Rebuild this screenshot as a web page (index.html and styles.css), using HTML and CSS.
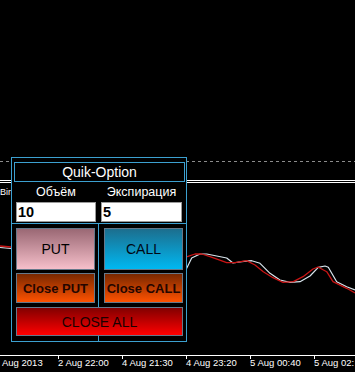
FILE: index.html
```html
<!DOCTYPE html>
<html>
<head>
<meta charset="utf-8">
<link rel="stylesheet" href="styles.css">
</head>
<body>
<div class="screen">
  <div class="chart">
    <svg class="plot" width="355" height="355" viewBox="0 0 355 355">
      <line x1="0" y1="161.5" x2="355" y2="161.5" stroke="#8c8c8c" stroke-dasharray="3 3"/>
      <line x1="0" y1="180.5" x2="355" y2="180.5" stroke="#ffffff"/>
      <line x1="0" y1="182.5" x2="355" y2="182.5" stroke="#ffffff"/>
      <text x="0" y="195" class="chart-label">Bin</text>
      <polyline fill="none" stroke="#d8e4ec" stroke-width="1.2" stroke-linejoin="round"
        points="0,247.5 11,248.5 120,262 186.7,268.3 191.7,258 200,254 206.7,254 216.7,256 226.7,258 233,263 241.7,261.7 251.7,260.7 260,263.3 270,273.3 280,280 290,282.3 300,281.7 310,276 318.3,267.3 325,266 328.3,267.3 336.7,281.7 346.7,286.7 355,290"/>
      <polyline fill="none" stroke="#c81414" stroke-width="1.3" stroke-linejoin="round"
        points="0,246 11,247 120,252 187.3,256.7 195,254 201.7,254 210,256.7 226.7,262.7 235,262.7 246.7,260.7 255,265 263.3,271.7 273,277.7 283,282.3 293.3,281.7 303,276.7 313,269 318,267 326.7,271.7 333,281.7 346.7,288.3 355,293"/>
    </svg>
    <div class="panel">
      <div class="title">Quik-Option</div>
      <div class="fields">
        <div class="lbl">Объём</div>
        <div class="lbl">Экспирация</div>
        <div class="inp">10</div>
        <div class="inp">5</div>
      </div>
      <div class="actions">
        <button class="btn put">PUT</button>
        <button class="btn call">CALL</button>
        <button class="btn close">Close PUT</button>
        <button class="btn close">Close CALL</button>
        <button class="btn all">CLOSE ALL</button>
      </div>
    </div>
  </div>
  <div class="axis">
    <span class="tick first">Aug 2013</span>
    <span class="tick">2 Aug 22:00</span>
    <span class="tick">4 Aug 21:30</span>
    <span class="tick">4 Aug 23:20</span>
    <span class="tick">5 Aug 00:40</span>
    <span class="tick">5 Aug 02:</span>
  </div>
</div>
</body>
</html>
```

FILE: styles.css
```css
* { box-sizing: border-box; }
html, body {
  margin: 0;
  padding: 0;
  background: #000;
}
body {
  width: 355px;
  height: 372px;
  overflow: hidden;
  font-family: "Liberation Sans", Arial, sans-serif;
}
.screen {
  width: 355px;
  height: 372px;
  overflow: hidden;
}
.chart {
  position: relative;
  height: 355px;
}
.plot {
  position: absolute;
  left: 0;
  top: 0;
  display: block;
}
.chart-label {
  font-family: "Liberation Sans", Arial, sans-serif;
  font-size: 9px;
  fill: #ffffff;
}
.panel {
  position: absolute;
  left: 11px;
  top: 157px;
  width: 176px;
  height: 185px;
  border: 1px solid #3ca0d0;
  background: #000;
  display: flex;
  flex-direction: column;
}
.title {
  margin: 4px 1px 0 2px;
  height: 20px;
  border: 1px solid #3ca0d0;
  color: #fff;
  font-size: 14px;
  line-height: 18px;
  text-align: center;
}
.fields {
  display: grid;
  grid-template-columns: 80px 81px;
  grid-template-rows: 20px 20px;
  column-gap: 5px;
  padding: 0 0 1px 4px;
}
.lbl {
  color: #fff;
  font-size: 12.5px;
  line-height: 20px;
  text-align: center;
}
.inp {
  background: #fff;
  border: 1px solid #9a9a9a;
  color: #000;
  font-weight: bold;
  font-size: 14.5px;
  line-height: 18px;
  padding-left: 1px;
}
.actions {
  flex: 1;
  border-top: 1px solid #3ca0d0;
  display: grid;
  grid-template-columns: 79px 79px;
  grid-template-rows: 42px 30px 30px;
  column-gap: 9px;
  row-gap: 3px;
  padding: 4px 3px 3px 4px;
  background: linear-gradient(90deg, transparent 86px, #3ca0d0 86px, #3ca0d0 87px, transparent 87px);
}
.btn {
  margin: 0;
  padding: 0;
  border: 1px solid #66788a;
  font-family: "Liberation Sans", Arial, sans-serif;
  font-size: 14px;
  line-height: 1;
  cursor: pointer;
}
.put {
  background: linear-gradient(180deg, #9a6874 0%, #f6bfca 100%);
  color: #000;
}
.call {
  background: linear-gradient(180deg, #1c6e8e 0%, #00b8f2 100%);
  color: #000814;
}
.close {
  background: linear-gradient(180deg, #782800 0%, #ff5200 100%);
  color: #240600;
  font-weight: bold;
  font-size: 13px;
}
.all {
  grid-column: 1 / 3;
  margin-top: 1px;
  background: linear-gradient(180deg, #820000 0%, #ff0000 100%);
  color: #1a0000;
}
.axis {
  border-top: 1px solid #fff;
  display: flex;
  margin-left: -6px;
  height: 17px;
}
.tick {
  position: relative;
  flex: 0 0 64px;
  color: #fff;
  font-size: 9.5px;
  line-height: 14px;
  white-space: nowrap;
}
.tick.first {
  padding-left: 8px;
}
.tick::before {
  content: "";
  position: absolute;
  left: 0;
  top: 0;
  width: 1px;
  height: 3px;
  background: #fff;
}
```
